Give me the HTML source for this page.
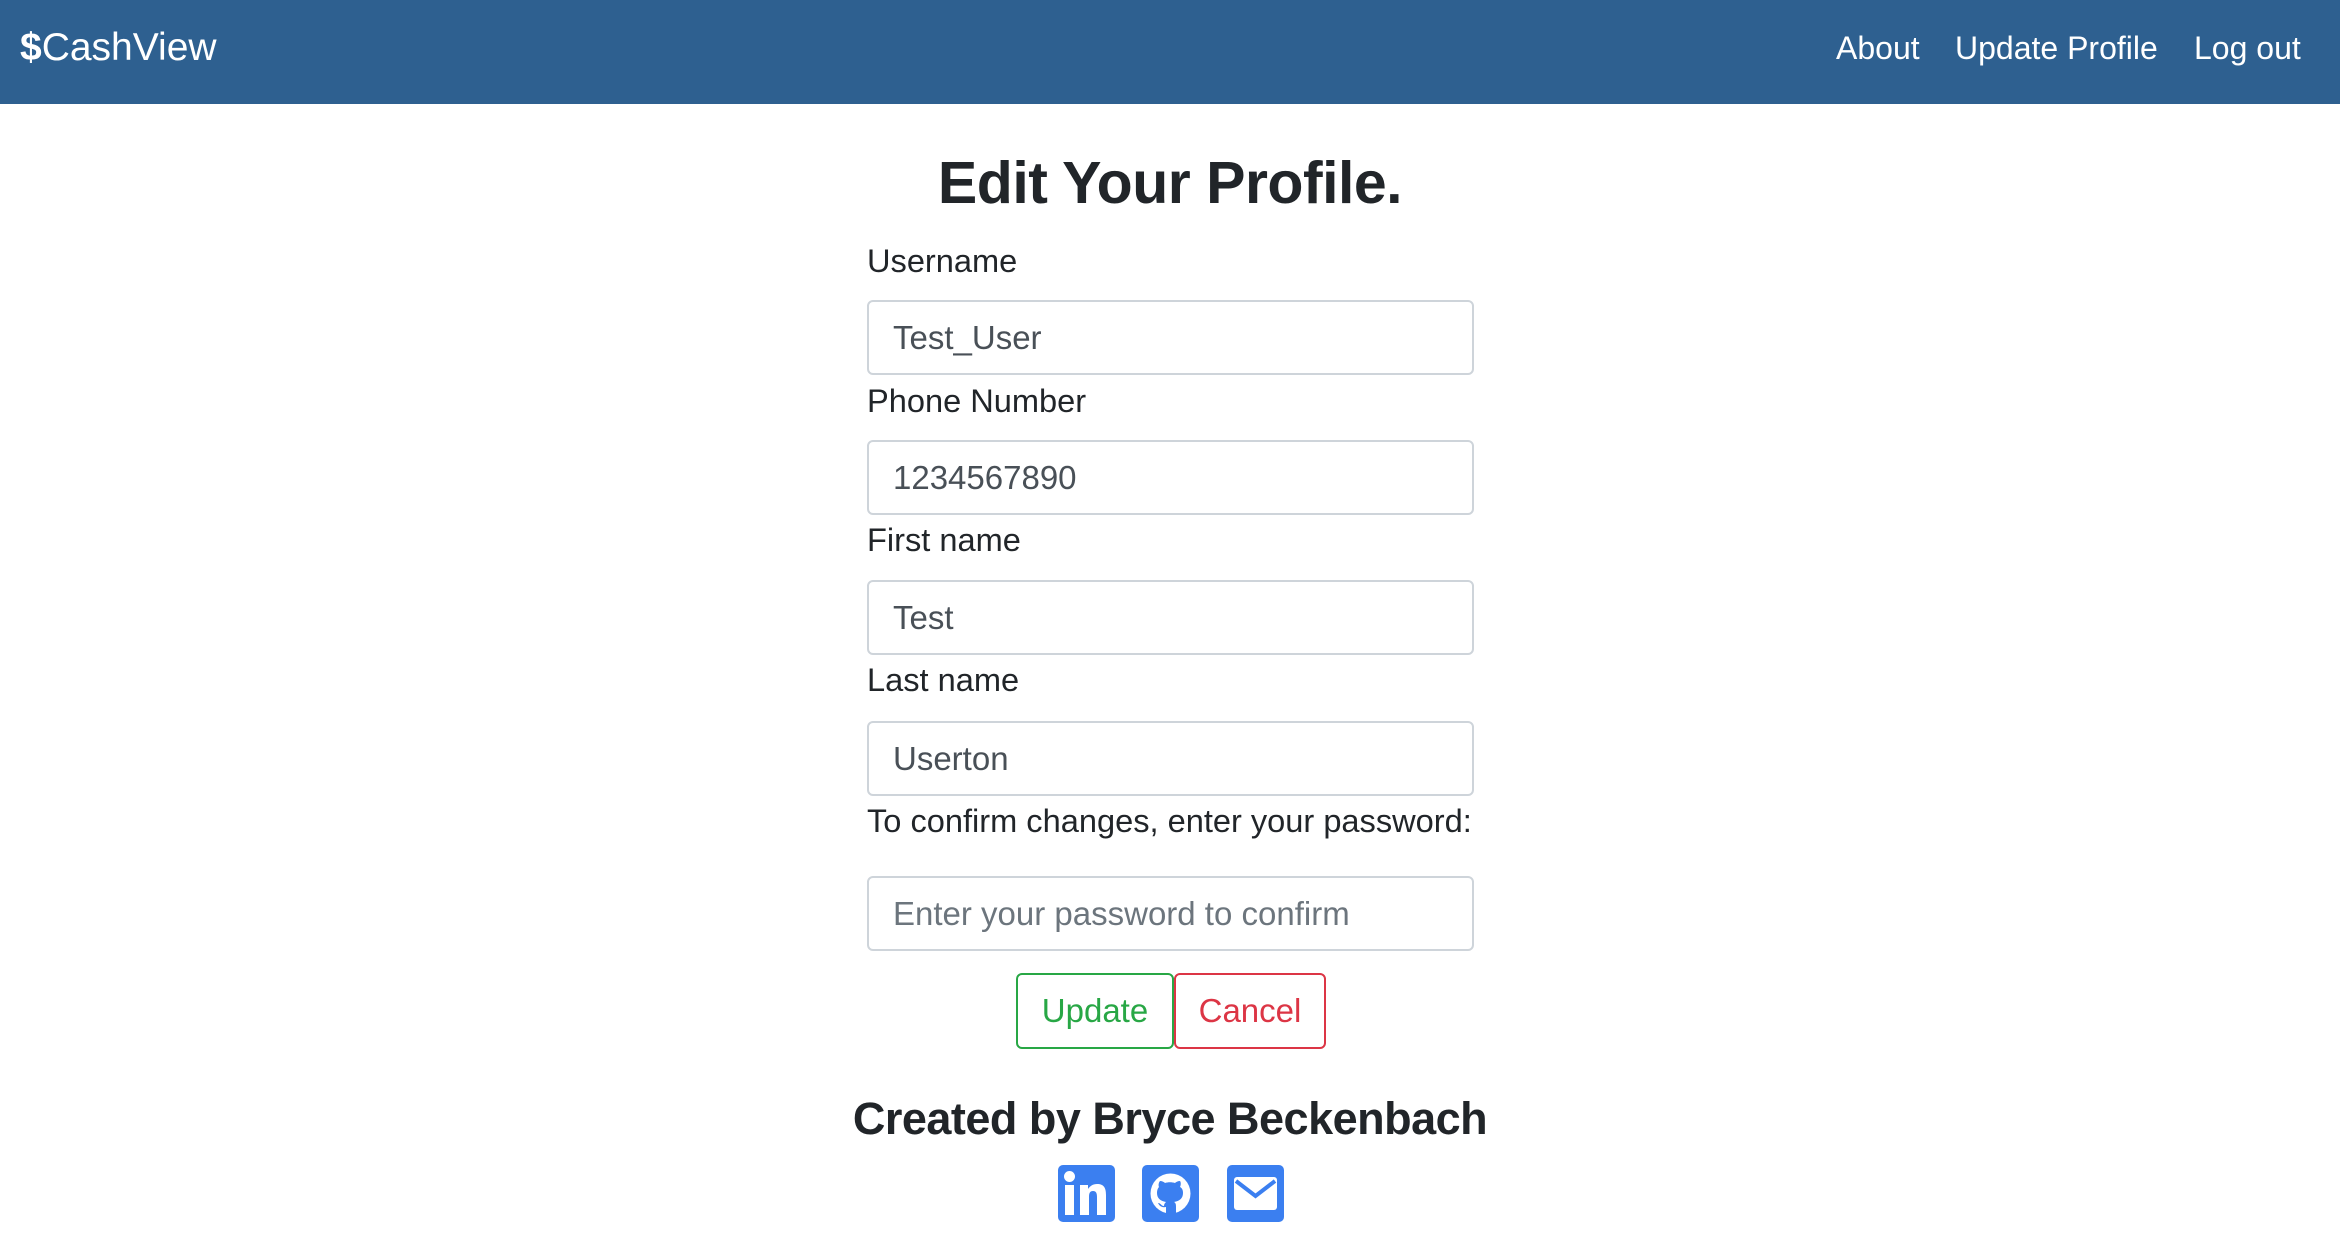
<!DOCTYPE html>
<html><head><meta charset="utf-8"><style>
*{box-sizing:border-box;margin:0;padding:0}
body{width:2340px;height:1244px;background:#fff;font-family:"Liberation Sans",Arial,sans-serif;color:#212529;position:relative;overflow:hidden}
.nav{position:absolute;left:0;top:0;width:2340px;height:104px;background:#2e6090}
.brand{position:absolute;left:20px;top:24px;font-size:39px;color:#fff;line-height:48px}
.brand b{font-weight:bold}
.nl{position:absolute;top:26px;font-size:32px;color:#fff;line-height:44px;white-space:nowrap}
h1{position:absolute;left:0;width:2340px;text-align:center;top:144px;font-size:59px;font-weight:bold;line-height:78px;letter-spacing:-0.5px}
.lbl{position:absolute;left:867px;font-size:32.6px;line-height:40px;white-space:nowrap}
.inp{position:absolute;left:867px;width:607px;height:75px;border:2px solid #ced4da;border-radius:6px;font-size:33px;color:#495057;padding-left:24px;line-height:71px}
.ph{color:#6c757d}
.btn{position:absolute;top:973px;height:76px;border:2px solid;border-radius:6px;font-size:33px;text-align:center;line-height:72px}
.foot{position:absolute;left:0;width:2340px;text-align:center;top:1091px;font-size:45px;font-weight:bold;line-height:56px;letter-spacing:-0.5px}
.ic{position:absolute;top:1165px;width:57px;height:57px;background:#3b7ff0;border-radius:5px}
</style></head><body>
<div class="nav">
<div class="brand"><b>$</b>CashView</div>
<div class="nl" style="left:1836px">About</div>
<div class="nl" style="left:1955px">Update Profile</div>
<div class="nl" style="left:2194px">Log out</div>
</div>
<h1>Edit Your Profile.</h1>
<div class="lbl" style="top:241px">Username</div>
<div class="inp" style="top:300px">Test_User</div>
<div class="lbl" style="top:381px">Phone Number</div>
<div class="inp" style="top:440px">1234567890</div>
<div class="lbl" style="top:520px">First name</div>
<div class="inp" style="top:580px">Test</div>
<div class="lbl" style="top:660px">Last name</div>
<div class="inp" style="top:721px">Userton</div>
<div class="lbl" style="top:801px">To confirm changes, enter your password:</div>
<div class="inp ph" style="top:876px">Enter your password to confirm</div>
<div class="btn" style="left:1016px;width:158px;border-color:#28a745;color:#28a745">Update</div>
<div class="btn" style="left:1174px;width:152px;border-color:#dc3545;color:#dc3545">Cancel</div>
<div class="foot">Created by Bryce Beckenbach</div>
<div class="ic" style="left:1058px"><svg width="57" height="57" viewBox="0 0 57 57"><rect x="7" y="20" width="9" height="30" fill="#fff"/><circle cx="11.5" cy="11.5" r="5.5" fill="#fff"/><path d="M22 20h8v4c2-3 5-5 9-5 7 0 9 4 9 11v20h-9V32c0-4-1-6-4-6s-4 2-4 6v18h-9z" fill="#fff"/></svg></div>
<div class="ic" style="left:1142px"><svg width="57" height="57" viewBox="0 0 57 57"><circle cx="28.5" cy="28.5" r="20" fill="#fff"/><path d="M24 49v-7c-5 1-7-2-8-4 3 0 3 3 6 3 0-2 1-3 2-4-6-1-9-4-9-9 0-3 1-5 2-6-1-2 0-5 1-6 2 0 4 1 5 2 3-1 7-1 10 0 1-1 3-2 5-2 1 1 1 4 0 6 2 1 3 3 3 6 0 5-3 8-9 9 2 1 2 3 2 5v7z" fill="#3b7ff0"/></svg></div>
<div class="ic" style="left:1227px"><svg width="57" height="57" viewBox="0 0 57 57"><rect x="7" y="12" width="43" height="33" rx="3" fill="#fff"/><path d="M9 16l19.5 15L48 16" stroke="#3b7ff0" stroke-width="4" fill="none"/></svg></div>
</body></html>
